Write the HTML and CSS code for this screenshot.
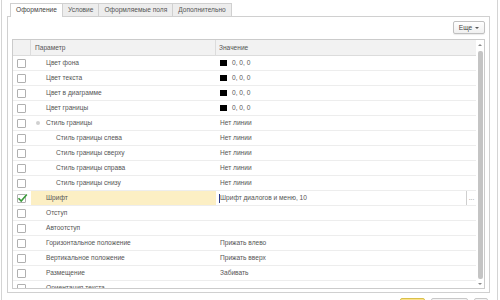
FILE: index.html
```html
<!DOCTYPE html>
<html lang="ru">
<head>
<meta charset="utf-8">
<title>Оформление</title>
<link rel="stylesheet" href="styles.css">
</head>
<body>
<div class="frame">
  <div class="tabs">
    <div class="tab active">Оформление</div>
    <div class="tab">Условие</div>
    <div class="tab">Оформляемые поля</div>
    <div class="tab">Дополнительно</div>
  </div>
  <div class="panel">
    <div class="toolbar">
      <div class="more">Еще <span class="caret"></span></div>
    </div>
    <div class="table">
      <div class="grid">
        <div class="head">
          <div class="h-check"></div>
          <div class="h-param">Параметр</div>
          <div class="h-value">Значение</div>
        </div>
        <div class="row"><div class="c-check"><span class="box"></span></div><div class="c-param">Цвет фона</div><div class="c-value"><span class="swatch"></span>0, 0, 0</div></div>
        <div class="row"><div class="c-check"><span class="box"></span></div><div class="c-param">Цвет текста</div><div class="c-value"><span class="swatch"></span>0, 0, 0</div></div>
        <div class="row"><div class="c-check"><span class="box"></span></div><div class="c-param">Цвет в диаграмме</div><div class="c-value"><span class="swatch"></span>0, 0, 0</div></div>
        <div class="row"><div class="c-check"><span class="box"></span></div><div class="c-param">Цвет границы</div><div class="c-value"><span class="swatch"></span>0, 0, 0</div></div>
        <div class="row"><div class="c-check"><span class="box"></span></div><div class="c-param"><span class="node"></span>Стиль границы</div><div class="c-value">Нет линии</div></div>
        <div class="row"><div class="c-check"><span class="box"></span></div><div class="c-param sub">Стиль границы слева</div><div class="c-value">Нет линии</div></div>
        <div class="row"><div class="c-check"><span class="box"></span></div><div class="c-param sub">Стиль границы сверху</div><div class="c-value">Нет линии</div></div>
        <div class="row"><div class="c-check"><span class="box"></span></div><div class="c-param sub">Стиль границы справа</div><div class="c-value">Нет линии</div></div>
        <div class="row"><div class="c-check"><span class="box"></span></div><div class="c-param sub">Стиль границы снизу</div><div class="c-value">Нет линии</div></div>
        <div class="row selected"><div class="c-check"><span class="box checked"><svg class="tick" viewBox="0 0 11 10" width="11" height="10"><path d="M1.5 5.2 L4.2 8 L9.8 1.5" fill="none" stroke="#3a9a3a" stroke-width="1.6"/></svg></span></div><div class="c-param">Шрифт</div><div class="c-value edit"><span class="cursor"></span><span class="edit-text">Шрифт диалогов и меню, 10</span><span class="dots">...</span></div></div>
        <div class="row"><div class="c-check"><span class="box"></span></div><div class="c-param">Отступ</div><div class="c-value"></div></div>
        <div class="row"><div class="c-check"><span class="box"></span></div><div class="c-param">Автоотступ</div><div class="c-value"></div></div>
        <div class="row"><div class="c-check"><span class="box"></span></div><div class="c-param">Горизонтальное положение</div><div class="c-value">Прижать влево</div></div>
        <div class="row"><div class="c-check"><span class="box"></span></div><div class="c-param">Вертикальное положение</div><div class="c-value">Прижать вверх</div></div>
        <div class="row"><div class="c-check"><span class="box"></span></div><div class="c-param">Размещение</div><div class="c-value">Забивать</div></div>
        <div class="row"><div class="c-check"><span class="box"></span></div><div class="c-param">Ориентация текста</div><div class="c-value"></div></div>
      </div>
      <div class="scroll">
        <span class="arrow up"></span>
        <span class="thumb"></span>
        <span class="arrow down"></span>
      </div>
    </div>
  </div>
  <div class="buttons">
    <div class="btn primary"></div>
    <div class="btn"></div>
    <div class="btn small"></div>
  </div>
</div>
</body>
</html>
```

FILE: styles.css
```css
* { box-sizing: border-box; }

html, body {
  margin: 0;
  padding: 0;
  width: 500px;
  height: 300px;
  overflow: hidden;
  background: #ffffff;
}

body {
  font-family: "Liberation Sans", Arial, sans-serif;
  font-size: 6.6px;
  color: #555555;
}

.frame {
  margin-left: 1px;
  width: 497px;
  height: 300px;
  border-left: 1px solid #d4d4d4;
  border-right: 1px solid #d4d4d4;
  padding: 3px 7px 0 5px;
  display: flex;
  flex-direction: column;
}

.tabs {
  display: flex;
  margin-left: 3px;
  height: 13px;
}

.tab {
  height: 13px;
  line-height: 12px;
  padding: 0 5px;
  border: 1px solid #d0d0d0;
  border-bottom: none;
  background: #ededed;
  color: #555555;
  margin-left: -1px;
  white-space: nowrap;
}

.tab:first-child { margin-left: 0; }

.tab.active {
  background: #ffffff;
  height: 14px;
  position: relative;
  z-index: 1;
  color: #444444;
}

.panel {
  height: 277px;
  border: 1px solid #d0d0d0;
  padding: 4px 4px 3px 4px;
  display: flex;
  flex-direction: column;
  flex: none;
}

.toolbar {
  display: flex;
  justify-content: flex-end;
  height: 13px;
  margin-bottom: 5px;
}

.more {
  width: 32px;
  height: 13px;
  border: 1px solid #c0c0c0;
  border-radius: 2px;
  background: linear-gradient(#ffffff, #f0f0f0);
  box-shadow: 0 1px 1px rgba(0,0,0,0.08);
  color: #444444;
  display: flex;
  align-items: center;
  justify-content: center;
  gap: 3px;
  line-height: 11px;
}

.caret {
  width: 0;
  height: 0;
  border-left: 2px solid transparent;
  border-right: 2px solid transparent;
  border-top: 2px solid #555555;
}

.table {
  flex: 1;
  border: 1px solid #cbcbcb;
  display: flex;
  overflow: hidden;
}

.grid {
  flex: 1;
  overflow: hidden;
}

.head {
  display: grid;
  grid-template-columns: 18px 185px 1fr;
  height: 16px;
  background: #f2f2f2;
  border-bottom: 1px solid #dcdcdc;
  color: #555555;
  line-height: 15px;
}

.h-check { border-right: 1px solid #dcdcdc; }
.h-param { border-right: 1px solid #dcdcdc; padding-left: 4px; }
.h-value { padding-left: 3px; }

.row {
  display: grid;
  grid-template-columns: 18px 185px 1fr;
  height: 15px;
  border-bottom: 1px solid #ededed;
  line-height: 14px;
}

.c-check {
  display: flex;
  align-items: center;
  padding-left: 4px;
}

.box {
  width: 9px;
  height: 9px;
  border: 1px solid #b0b0b0;
  border-radius: 1px;
  background: #ffffff;
  position: relative;
}

.tick {
  position: absolute;
  left: -1px;
  top: -2px;
}

.c-param {
  padding-left: 15px;
  white-space: nowrap;
  display: flex;
  align-items: center;
}

.c-param.sub { padding-left: 25px; }

.node {
  width: 4px;
  height: 4px;
  border-radius: 50%;
  background: #d0d0d0;
  margin-left: -10px;
  margin-right: 6px;
}

.c-value {
  padding-left: 4px;
  white-space: nowrap;
  display: flex;
  align-items: center;
}

.swatch {
  width: 7px;
  height: 6px;
  background: #000000;
  margin-right: 5px;
}

.row.selected .c-param { background: #fcefc4; }

.c-value.edit {
  padding-left: 3px;
}

.cursor {
  width: 1px;
  height: 9px;
  background: #2a3a8a;
}

.edit-text { flex: 1; }

.dots {
  width: 10px;
  height: 14px;
  border-left: 1px solid #cfcfcf;
  color: #888888;
  text-align: center;
  line-height: 13px;
}

.scroll {
  width: 8px;
  display: flex;
  flex-direction: column;
  align-items: center;
  padding: 4px 0 3px;
}

.arrow {
  width: 0;
  height: 0;
  border-left: 2px solid transparent;
  border-right: 2px solid transparent;
}

.arrow.up { border-bottom: 2px solid #8a8a8a; }
.arrow.down { border-top: 2px solid #8a8a8a; }

.thumb {
  width: 5px;
  flex: 1;
  margin: 5px 0 4px;
  border-radius: 2px;
  background: #c4c4c4;
}

.buttons {
  display: flex;
  justify-content: flex-end;
  gap: 6px;
  margin-top: 5px;
  padding-right: 2px;
}

.btn {
  width: 37px;
  height: 20px;
  border: 1px solid #c8c8c8;
  border-radius: 2px;
  background: #f4f4f4;
}

.btn.primary {
  width: 25px;
  background: #fbe18a;
  border-color: #d9c04a;
}

.btn.small { width: 14px; }
```
